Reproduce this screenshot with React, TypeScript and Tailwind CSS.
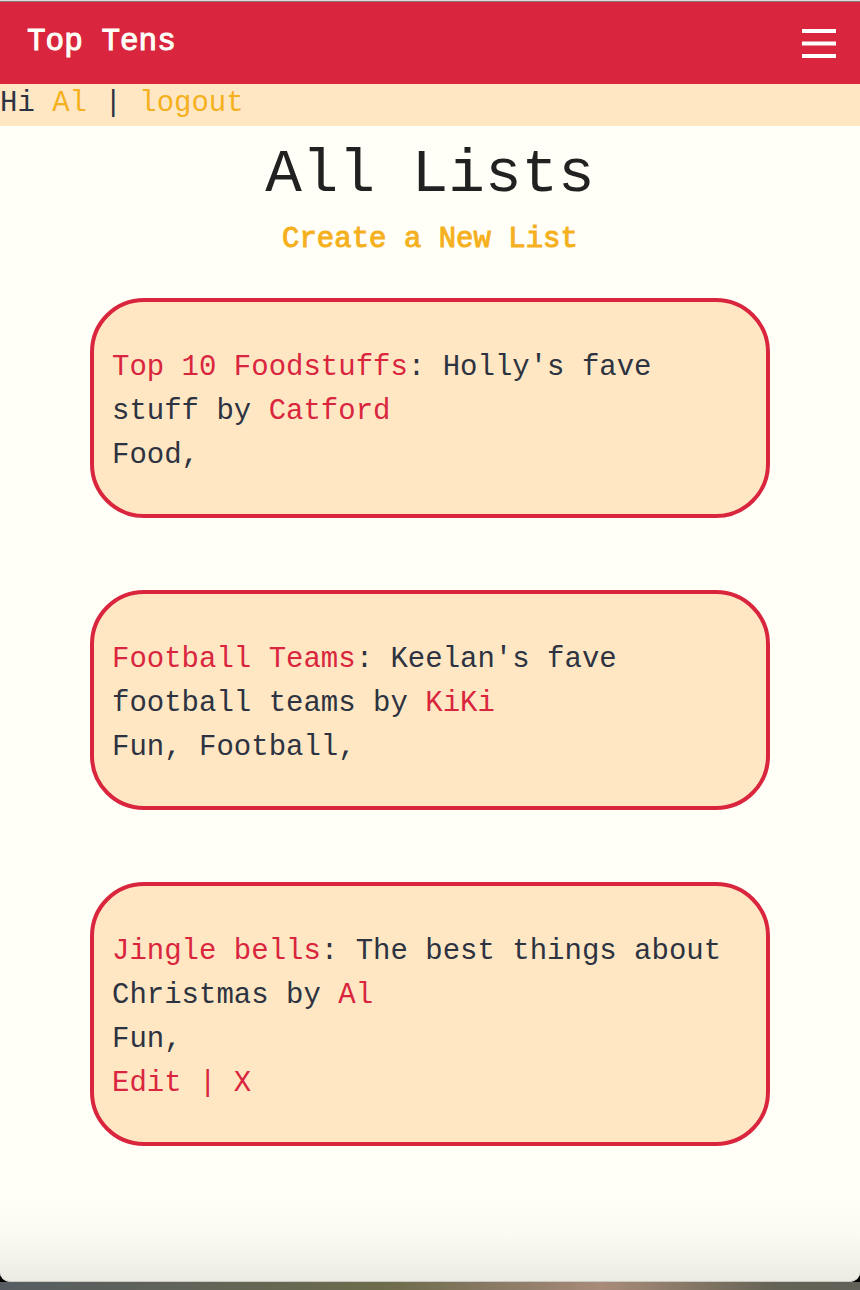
type Entry = {
  title: string;
  description: string;
  author: string;
  tags: string;
  editable?: boolean;
};

const entries: Entry[] = [
  { title: 'Top 10 Foodstuffs', description: "Holly's fave stuff", author: 'Catford', tags: 'Food,' },
  { title: 'Football Teams', description: "Keelan's fave football teams", author: 'KiKi', tags: 'Fun, Football,' },
  { title: 'Jingle bells', description: 'The best things about Christmas', author: 'Al', tags: 'Fun,', editable: true },
];

function ListCard({ entry }: { entry: Entry }) {
  return (
    <li className="rounded-[54px] border-4 border-[#d9263e] bg-[#ffe7c4] px-[18px] pt-11 pb-9">
      <p>
        <a href="#list" className="text-[#d9263e]">{entry.title}</a>: {entry.description} by{' '}
        <a href="#author" className="text-[#d9263e]">{entry.author}</a>
      </p>
      <p>{entry.tags}</p>
      {entry.editable && (
        <p className="text-[#d9263e]">
          <a href="#edit">Edit</a> | <a href="#delete">X</a>
        </p>
      )}
    </li>
  );
}

function MenuIcon() {
  return (
    <svg width="34" height="30" viewBox="0 0 34 30" fill="#fff" aria-hidden="true">
      <rect y="0" width="34" height="4" />
      <rect y="12.5" width="34" height="4" />
      <rect y="25" width="34" height="4" />
    </svg>
  );
}

export default function App() {
  return (
    <div className="flex min-h-screen flex-col bg-black font-['Liberation_Mono',monospace] text-[29px] leading-[44px] text-[#2d3340]">
      <div className="flex grow flex-col rounded-b-[10px] bg-[#fffff7]">
        <div className="h-px bg-[#dcdcdc]" />
        <header className="flex items-center justify-between border-t border-[#8c7676] bg-[#d9263e] pt-[18px] pr-6 pb-5 pl-[27px]">
          <a href="#home" className="text-[31px] text-[#fffff7] [-webkit-text-stroke:1px_#fffff7]">Top Tens</a>
          <button type="button" aria-label="Menu" className="pt-1">
            <MenuIcon />
          </button>
        </header>
        <p className="bg-[#ffe7c4] pb-[2px] leading-[40px]">
          Hi <a href="#profile" className="text-[#f5b01d]">Al</a> |{' '}
          <a href="#logout" className="text-[#f5b01d]">logout</a>
        </p>
        <main className="px-[90px] pt-2">
          <h1 className="pb-[2px] text-center text-[61px] leading-[82px] text-[#212121]">All Lists</h1>
          <p className="text-center">
            <a href="#new" className="text-[#f5b01d] [-webkit-text-stroke:1px_#f5b01d]">Create a New List</a>
          </p>
          <ul className="flex flex-col gap-[72px] pt-9">
            {entries.map((entry) => (
              <ListCard key={entry.title} entry={entry} />
            ))}
          </ul>
        </main>
        <div className="mt-auto h-[90px] rounded-b-[10px] border-b border-[#c9c9c2] bg-linear-to-b from-[#fffff7] via-[#fafaf1] to-[#ebebe4]" />
      </div>
      <div className="h-2 bg-linear-to-r from-[#565c62] via-[#6d6c4b] via-45% to-[#626158]">
        <div className="h-full bg-linear-to-r from-transparent from-45% via-[#a88b79] via-70% to-transparent to-90%" />
      </div>
    </div>
  );
}
